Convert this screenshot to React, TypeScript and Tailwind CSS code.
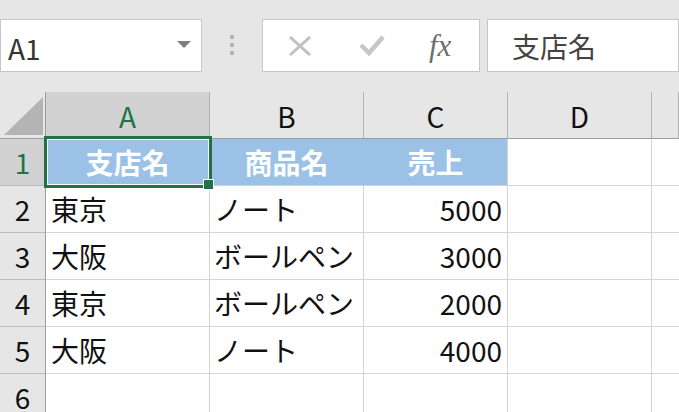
import React from "react";

const font = "font-['Noto_Sans_CJK_JP','Noto_Sans',sans-serif]";

const cols = ["A", "B", "C", "D", ""];
const widths = ["w-[164px]", "w-[154px]", "w-[144px]", "w-[144px]", "flex-1"];

const rows: { a: string; b: string; c: string }[] = [
  { a: "東京", b: "ノート", c: "5000" },
  { a: "大阪", b: "ボールペン", c: "3000" },
  { a: "東京", b: "ボールペン", c: "2000" },
  { a: "大阪", b: "ノート", c: "4000" },
  { a: "", b: "", c: "" },
];

function FormulaBar() {
  return (
    <div className="flex h-[92px] items-start bg-[#e6e6e6] pt-[19px]">
      <div className="flex h-[53px] w-[202px] items-center justify-between border border-[#c6c6c6] bg-white pl-[7px] pr-[10px]">
        <span className="pt-[4px] text-[28px] leading-none text-[#333]">A1</span>
        <svg width="14" height="7" viewBox="0 0 14 7" className="mb-[2px]">
          <path d="M0 0 L14 0 L7 7 Z" fill="#7f7f7f" />
        </svg>
      </div>
      <div className="flex w-[60px] flex-col items-center justify-center gap-[4px] self-stretch pb-[21px]">
        <span className="h-[4px] w-[4px] bg-[#b4b4b4]" />
        <span className="h-[4px] w-[4px] bg-[#b4b4b4]" />
        <span className="h-[4px] w-[4px] bg-[#b4b4b4]" />
      </div>
      <div className="flex h-[53px] w-[218px] items-center border border-[#c6c6c6] bg-white">
        <svg width="24" height="20" viewBox="0 0 24 20" className="ml-[25px]">
          <path d="M2 1 L22 19 M22 1 L2 19" stroke="#c1c1c1" strokeWidth="3" />
        </svg>
        <svg width="26" height="21" viewBox="0 0 26 21" className="ml-[47px]">
          <path d="M2 10 L10 18 L24 2" stroke="#c6c6c6" strokeWidth="4.5" fill="none" />
        </svg>
        <span className="ml-[44px] font-['Liberation_Serif',serif] text-[31px] italic leading-none text-[#6e6e6e]">
          fx
        </span>
      </div>
      <div className="ml-[7px] flex h-[53px] flex-1 items-center border border-[#c6c6c6] bg-white pl-[24px]">
        <span className="text-[28px] leading-none text-[#444]">支店名</span>
      </div>
    </div>
  );
}

function HeaderRow() {
  return (
    <div className="flex h-[47px] border-b border-[#9e9e9e] bg-[#e6e6e6]">
      <div className="flex w-[46px] items-end justify-end border-r border-[#9e9e9e] pb-[3px] pr-[2px]">
        <svg width="39" height="38" viewBox="0 0 39 38">
          <path d="M39 0 L39 38 L0 38 Z" fill="#b4b4b4" />
        </svg>
      </div>
      {cols.map((c, i) => (
        <div
          key={i}
          className={`${widths[i]} flex items-center justify-center border-r border-[#b1b1b1] pt-[1px] text-[28px] leading-none ${
            i === 0 ? "bg-[#d2d2d2] text-[#217346]" : "text-[#111]"
          }`}
        >
          {c}
        </div>
      ))}
    </div>
  );
}

function RowHead({ n, active }: { n: number; active?: boolean }) {
  return (
    <div
      className={`flex w-[46px] items-center justify-center border-r border-b border-r-[#9e9e9e] border-b-[#bdbdbd] text-[28px] leading-none ${
        active ? "bg-[#d2d2d2] text-[#217346]" : "bg-[#e6e6e6] text-[#111]"
      }`}
    >
      {n}
    </div>
  );
}

export default function App() {
  return (
    <div className={`relative h-[412px] w-[679px] overflow-hidden bg-white ${font}`}>
      <FormulaBar />
      <HeaderRow />

      <div className="flex h-[47px]">
        <RowHead n={1} active />
        <div className="flex w-[164px] items-center justify-center border-b border-r border-b-[#d4d4d4] border-r-[#9bc2e6] bg-[#9bc2e6] text-[28px] font-bold leading-none text-white">
          支店名
        </div>
        <div className="flex w-[154px] items-center justify-center border-b border-r border-b-[#d4d4d4] border-r-[#9bc2e6] bg-[#9bc2e6] text-[28px] font-bold leading-none text-white">
          商品名
        </div>
        <div className="flex w-[144px] items-center justify-center border-b border-r border-b-[#d4d4d4] border-r-[#d4d4d4] bg-[#9bc2e6] text-[28px] font-bold leading-none text-white">
          売上
        </div>
        <div className="w-[144px] border-b border-r border-[#d4d4d4]" />
        <div className="flex-1 border-b border-[#d4d4d4]" />
      </div>

      {rows.map((r, i) => (
        <div key={i} className="flex h-[47px] text-[28px] leading-none text-[#111]">
          <RowHead n={i + 2} />
          <div className="flex w-[164px] items-center border-b border-r border-[#d4d4d4] pl-[5px]">{r.a}</div>
          <div className="flex w-[154px] items-center border-b border-r border-[#d4d4d4] pl-[4px]">{r.b}</div>
          <div className="flex w-[144px] items-center justify-end border-b border-r border-[#d4d4d4] pr-[5px]">{r.c}</div>
          <div className="w-[144px] border-b border-r border-[#d4d4d4]" />
          <div className="flex-1 border-b border-[#d4d4d4]" />
        </div>
      ))}

      {/* selection of A1 */}
      <div className="pointer-events-none absolute left-[44px] top-[136px] h-[52px] w-[168px] border-[3px] border-[#217346]">
        <div className="h-full w-full border border-white" />
      </div>
      <div className="absolute left-[203px] top-[179px] h-[11px] w-[11px] border border-white bg-[#217346]" />
    </div>
  );
}
